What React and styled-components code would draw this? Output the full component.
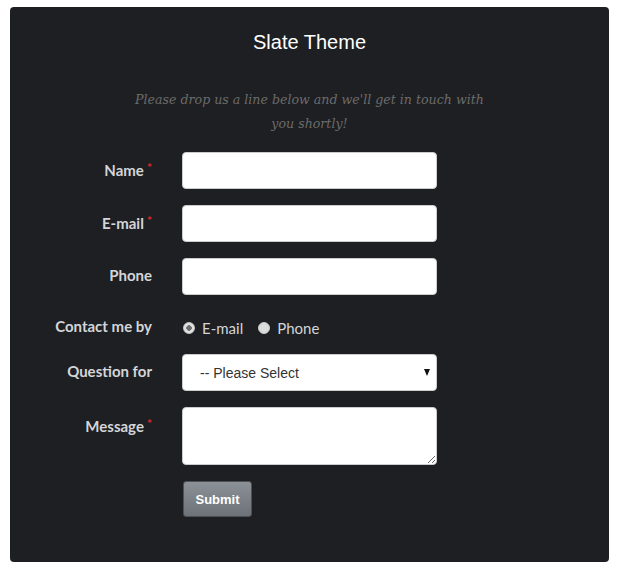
import React from 'react';
import styled, {createGlobalStyle} from 'styled-components';

const GlobalStyle = createGlobalStyle`
  body {
    margin: 0;
    background: #fff;
    font-family: "Liberation Sans", Arial, sans-serif;
  }
`

const Card = styled.div`
  margin: 7px 0 0 10px;
  width: 599px;
  height: 555px;
  box-sizing: border-box;
  background-color: #1e1f22;
  border-radius: 4px;
  padding-top: 23px;
`

const Title = styled.h1`
  margin: 0;
  text-align: center;
  font-family: "Liberation Sans", Arial, sans-serif;
  font-weight: normal;
  font-size: 20px;
  line-height: 24px;
  color: #fff;
`

const Intro = styled.p`
  margin: 34px auto 16px;
  width: 360px;
  text-align: center;
  font-family: "DejaVu Serif", serif;
  font-style: italic;
  font-size: 12.6px;
  line-height: 24px;
  color: #6b6b6b;
`

const Form = styled.form`
  display: grid;
  grid-template-columns: 142px 255px;
  column-gap: 30px;
  row-gap: 16px;
`

const Label = styled.label`
  justify-self: end;
  padding-top: ${p => p.$top || 0}px;
  padding-bottom: ${p => (p.$top ? 0 : 4)}px;
  align-self: ${p => (p.$top ? 'start' : 'center')};
  font-family: Lato, "Liberation Sans", sans-serif;
  font-weight: bold;
  font-size: 15px;
  line-height: 20px;
  color: #d3d5d8;
`

const Star = styled.span`
  color: #e3242b;
  font-size: 12px;
  vertical-align: 4px;
  margin-left: 3px;
`

const Field = styled.input`
  box-sizing: border-box;
  width: 255px;
  height: 37px;
  border: 1px solid #ccc;
  border-radius: 4px;
  background: #fff;
  padding: 0 12px;
  font-size: 14px;
`

const Area = styled.textarea`
  box-sizing: border-box;
  width: 255px;
  height: 58px;
  border: 1px solid #ccc;
  border-radius: 4px;
  background: #fff;
  display: block;
`

const SelectWrap = styled.div`
  position: relative;
  width: 255px;
  height: 37px;
`

const Select = styled.select`
  appearance: none;
  box-sizing: border-box;
  width: 100%;
  height: 100%;
  border: 1px solid #ccc;
  border-radius: 4px;
  background: #fff;
  padding: 0 0 0 17px;
  font-family: "Liberation Sans", Arial, sans-serif;
  font-size: 14px;
  color: #333;
`

const Arrow = styled.span`
  position: absolute;
  right: 7px;
  top: 15px;
  width: 0;
  height: 0;
  border-left: 3.5px solid transparent;
  border-right: 3.5px solid transparent;
  border-top: 7px solid #111;
  pointer-events: none;
`

const Radios = styled.div`
  display: flex;
  align-items: center;
  gap: 14px;
  padding-top: 6px;
  height: 21px;
`

const RadioLabel = styled.label`
  display: flex;
  align-items: center;
  gap: 7px;
  font-family: Lato, "Liberation Sans", sans-serif;
  font-size: 15px;
  line-height: 20px;
  color: #d3d5d8;
`

const Radio = styled.input`
  appearance: none;
  margin: 0 0 0 1px;
  width: 12px;
  height: 12px;
  border-radius: 50%;
  background: #dcdcdc;
  border: 1px solid #c8c8c8;
  box-sizing: border-box;
  &:checked {
    background: radial-gradient(circle, #6e6e6e 0 2.5px, #e2e2e2 3px);
  }
`

const Submit = styled.button`
  grid-column: 2;
  justify-self: start;
  margin-left: 1px;
  width: 69px;
  height: 36px;
  border: 1px solid #4d5055;
  border-radius: 3px;
  background: linear-gradient(#8b9197, #6c7278);
  color: #fff;
  font-family: "Liberation Sans", Arial, sans-serif;
  font-weight: bold;
  font-size: 13px;
`

const App = () => {
  return (
    <>
      <GlobalStyle />
      <Card>
        <Title>Slate Theme</Title>
        <Intro>Please drop us a line below and we'll get in touch with you shortly!</Intro>
        <Form onSubmit={e => e.preventDefault()}>
          <Label>Name<Star>*</Star></Label>
          <Field type='text' />
          <Label>E-mail<Star>*</Star></Label>
          <Field type='email' />
          <Label>Phone</Label>
          <Field type='text' />
          <Label $top={5}>Contact me by</Label>
          <Radios>
            <RadioLabel><Radio type='radio' name='contact' defaultChecked />E-mail</RadioLabel>
            <RadioLabel><Radio type='radio' name='contact' />Phone</RadioLabel>
          </Radios>
          <Label>Question for</Label>
          <SelectWrap>
            <Select defaultValue=''>
              <option value=''>-- Please Select</option>
              <option>Sales</option>
              <option>Support</option>
            </Select>
            <Arrow />
          </SelectWrap>
          <Label $top={7}>Message<Star>*</Star></Label>
          <Area />
          <Submit type='submit'>Submit</Submit>
        </Form>
      </Card>
    </>
  )
}

export default App;
